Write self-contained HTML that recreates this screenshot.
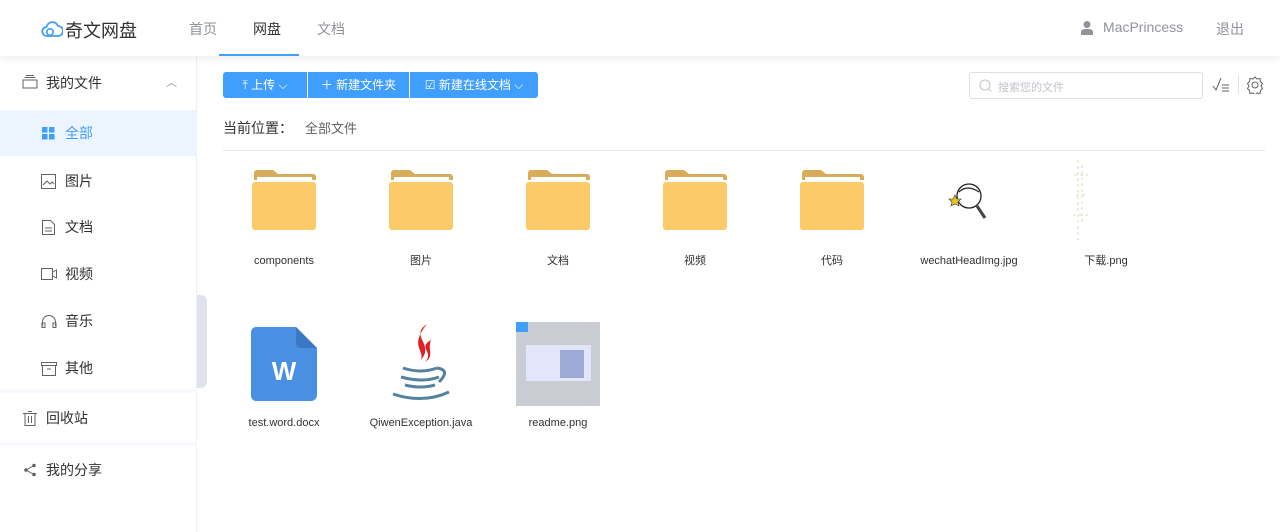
<!DOCTYPE html>
<html><head><meta charset="utf-8"><style>
*{margin:0;padding:0;box-sizing:border-box}
body{width:1280px;height:532px;overflow:hidden;background:#fff;font-family:"Liberation Sans","Noto Sans CJK SC",sans-serif;color:#303133;position:relative}
.abs{position:absolute}
.hdr{left:0;top:0;width:1280px;height:56px;background:#fff;box-shadow:0 2px 8px rgba(0,0,0,.08);z-index:2}
.nav{font-size:14px;color:#909399;top:19px}
.side{left:0;top:56px;width:197px;height:476px;border-right:1px solid #eef0f3;background:#fff}
.si{position:absolute;left:0;width:197px;height:46px;line-height:46px;font-size:14px;color:#303133}
.si svg{position:absolute;top:15px}
.btn{top:72px;height:26px;background:#409eff;color:#fff;font-size:12px;line-height:26px;text-align:center}
.item{position:absolute;width:130px;text-align:center;font-size:11px;line-height:14px;height:14px;color:#303133}
.folder{position:absolute}
</style></head><body>
<div class="abs hdr">
 <svg class="abs" style="left:41px;top:20px" width="22" height="18" viewBox="0 0 22 18"><path d="M6 16a4.5 4.5 0 0 1-.5-9A6 6 0 0 1 17 6a4.6 4.6 0 0 1 0 10z" fill="none" stroke="#409eff" stroke-width="1.8"/><circle cx="9" cy="12" r="3.2" fill="none" stroke="#409eff" stroke-width="1.6"/></svg>
 <div class="abs" style="left:65px;top:17px;font-size:18px;color:#303133">奇文网盘</div>
 <div class="abs nav" style="left:189px">首页</div>
 <div class="abs nav" style="left:253px;color:#303133">网盘</div>
 <div class="abs" style="left:219px;top:54px;width:80px;height:2px;background:#409eff"></div>
 <div class="abs nav" style="left:317px">文档</div>
 <svg class="abs" style="left:1080px;top:20px" width="14" height="16" viewBox="0 0 14 16"><circle cx="7" cy="4.5" r="3.5" fill="#909399"/><path d="M1 15v-3a4 3 0 0 1 4-3h4a4 3 0 0 1 4 3v3z" fill="#909399"/></svg>
 <div class="abs nav" style="left:1103px;color:#909399">MacPrincess</div>
 <div class="abs nav" style="left:1216px">退出</div>
</div>
<div class="abs side">
 <div class="si" style="top:4px"><svg style="left:22px" width="16" height="14" viewBox="0 0 16 14"><path d="M1 5h14v8H1zM2.5 2.5h11M4 .5h8" fill="none" stroke="#606266"/></svg><span style="position:absolute;left:46px">我的文件</span><span style="position:absolute;left:166px;color:#909399;font-size:11px">︿</span></div>
 <div class="si" style="top:54px;background:#ecf5ff;color:#409eff"><svg style="left:42px;top:17px" width="13" height="13"><rect x="0" y="0" width="5.5" height="5.5" fill="#409eff"/><rect x="7" y="0" width="5.5" height="5.5" fill="#409eff"/><rect x="0" y="7" width="5.5" height="5.5" fill="#409eff"/><rect x="7" y="7" width="5.5" height="5.5" fill="#409eff"/></svg><span style="position:absolute;left:65px">全部</span></div>
 <div class="si" style="top:102px"><svg style="left:41px;top:16px" width="15" height="15" viewBox="0 0 15 15"><rect x=".5" y=".5" width="14" height="14" fill="none" stroke="#606266"/><path d="M2 11l4-4 3 3 2-2 2 2" fill="none" stroke="#606266"/></svg><span style="position:absolute;left:65px">图片</span></div>
 <div class="si" style="top:148px"><svg style="left:42px;top:16px" width="13" height="15" viewBox="0 0 13 15"><path d="M.5.5h8l4 4v10H.5z M3 8h7M3 11h7" fill="none" stroke="#606266"/></svg><span style="position:absolute;left:65px">文档</span></div>
 <div class="si" style="top:195px"><svg style="left:41px;top:17px" width="16" height="12" viewBox="0 0 16 12"><rect x=".5" y=".5" width="11" height="11" fill="none" stroke="#606266"/><path d="M12 4l3.5-2v8L12 8" fill="none" stroke="#606266"/></svg><span style="position:absolute;left:65px">视频</span></div>
 <div class="si" style="top:242px"><svg style="left:41px;top:16px" width="16" height="14" viewBox="0 0 16 14"><path d="M1.5 12V8a6.5 6.5 0 0 1 13 0v4M1 9h3v4.5H1zM12 9h3v4.5h-3z" fill="none" stroke="#606266"/></svg><span style="position:absolute;left:65px">音乐</span></div>
 <div class="si" style="top:289px"><svg style="left:41px;top:17px" width="16" height="14" viewBox="0 0 16 14"><path d="M.5.5h15v3H.5zM1.5 3.5v10h13v-10M6 7h4" fill="none" stroke="#606266"/></svg><span style="position:absolute;left:65px">其他</span></div>
 <div class="abs" style="left:0;top:333px;width:197px;height:4px;background:#f7f9fc"></div>
 <div class="si" style="top:339px"><svg style="left:23px;top:16px" width="14" height="15" viewBox="0 0 14 15"><path d="M0 2.5h14M5 .5h4M2 2.5v12h10v-12M5.5 5v7M8.5 5v7" fill="none" stroke="#606266"/></svg><span style="position:absolute;left:46px">回收站</span></div>
 <div class="abs" style="left:0;top:386px;width:197px;height:4px;background:#f7f9fc"></div>
 <div class="si" style="top:391px"><svg style="left:23px;top:16px" width="14" height="14" viewBox="0 0 14 14"><circle cx="11" cy="2.5" r="1.8" fill="#606266"/><circle cx="3" cy="7" r="1.8" fill="#606266"/><circle cx="11" cy="11.5" r="1.8" fill="#606266"/><path d="M11 2.5L3 7l8 4.5" fill="none" stroke="#606266"/></svg><span style="position:absolute;left:46px">我的分享</span></div>
</div>
<div class="abs" style="left:197px;top:295px;width:10px;height:93px;background:#dfe3ea;border-radius:0 6px 6px 0"></div>

<div class="abs btn" style="left:223px;width:84px;border-radius:3px 0 0 3px">⤒ 上传 ⌵</div>
<div class="abs btn" style="left:308px;width:101px">＋ 新建文件夹</div>
<div class="abs btn" style="left:410px;width:128px;border-radius:0 3px 3px 0">☑ 新建在线文档 ⌵</div>
<div class="abs" style="left:969px;top:72px;width:234px;height:27px;border:1px solid #dcdfe6;border-radius:3px"></div>
<svg class="abs" style="left:979px;top:79px" width="13" height="13" viewBox="0 0 13 13"><circle cx="6" cy="6" r="5" fill="none" stroke="#c0c4cc"/><path d="M9.5 9.5l3 3" stroke="#c0c4cc"/></svg>
<div class="abs" style="left:998px;top:79px;font-size:11px;color:#c0c4cc">搜索您的文件</div>
<svg class="abs" style="left:1212px;top:77px" width="18" height="16" viewBox="0 0 18 16"><path d="M1 9l3 4 5-12M10 8h7M10 11h7M10 14h7" fill="none" stroke="#606266"/></svg>
<div class="abs" style="left:1238px;top:76px;width:1px;height:18px;background:#dcdfe6"></div>
<svg class="abs" style="left:1246px;top:76px" width="18" height="18" viewBox="0 0 18 18"><path d="M9 1l2 2 3-.5.5 3 2 2-1.5 2.5 1.5 2.5-2 2-.5 3-3-.5-2 2-2-2-3 .5-.5-3-2-2L3 10 1.5 7.5l2-2 .5-3 3 .5z" fill="none" stroke="#606266"/><circle cx="9" cy="9" r="3" fill="none" stroke="#606266"/></svg>
<div class="abs" style="left:223px;top:118px;font-size:14px;color:#303133">当前位置：</div>
<div class="abs" style="left:305px;top:118px;font-size:13px;color:#606266">全部文件</div>
<div class="abs" style="left:223px;top:150px;width:1042px;height:1px;background:#e4e7ed"></div>

<svg width="0" height="0" style="position:absolute"><defs><g id="fd"><path d="M2 10V3a3 3 0 0 1 3-3h16l5 4h35a3 3 0 0 1 3 3v3z" fill="#d9ac5b"/><rect x="5" y="7" width="55" height="8" fill="#fff"/><rect x="0" y="12" width="64" height="48" rx="3" fill="#fcca69"/></g></defs></svg>
<svg class="folder" style="left:252px;top:170px" width="64" height="60"><use href="#fd"/></svg>
<svg class="folder" style="left:389px;top:170px" width="64" height="60"><use href="#fd"/></svg>
<svg class="folder" style="left:526px;top:170px" width="64" height="60"><use href="#fd"/></svg>
<svg class="folder" style="left:663px;top:170px" width="64" height="60"><use href="#fd"/></svg>
<svg class="folder" style="left:800px;top:170px" width="64" height="60"><use href="#fd"/></svg>
<div class="item" style="left:219px;top:254px">components</div>
<div class="item" style="left:356px;top:254px">图片</div>
<div class="item" style="left:493px;top:254px">文档</div>
<div class="item" style="left:630px;top:254px">视频</div>
<div class="item" style="left:767px;top:254px">代码</div>
<svg class="abs" style="left:947px;top:178px" width="48" height="44" viewBox="0 0 48 44"><circle cx="22" cy="18" r="12" fill="#fff" stroke="#222" stroke-width="1.3"/><path d="M12 14q8-8 20 0" fill="none" stroke="#222" stroke-width="1.3"/><path d="M30 28l8 12" stroke="#444" stroke-width="3"/><polygon points="8,17 10,21 14,21 11,24 12,28 8,26 4,28 5,24 2,21 6,21" fill="#e6c229" stroke="#333" stroke-width=".6"/></svg>
<div class="item" style="left:904px;top:254px">wechatHeadImg.jpg</div>
<svg class="abs" style="left:1068px;top:155px" width="30" height="90"><path d="M10 5v80M6 20h14M8 40h12M5 60h16M14 10v60" stroke="#e3e8d2" stroke-width="1.5" stroke-dasharray="3 3"/></svg>
<div class="item" style="left:1041px;top:254px">下载.png</div>

<svg class="abs" style="left:251px;top:327px" width="66" height="74" viewBox="0 0 66 74"><path d="M5 0h40l21 21v47a6 6 0 0 1-6 6H5a5 5 0 0 1-5-5V5a5 5 0 0 1 5-5z" fill="#4a90e2"/><path d="M45 0v16a5 5 0 0 0 5 5h16z" fill="#3a78c6"/><text x="33" y="53" text-anchor="middle" font-family="Liberation Sans" font-weight="bold" font-size="26" fill="#fff">W</text></svg>
<svg class="abs" style="left:389px;top:322px" width="64" height="84" viewBox="0 0 64 84"><path d="M38 2c-18 12 8 20-6 36 4-10-12-14 6-36zM42 18c-14 8 4 12-6 22 10-6 2-12 6-22z" fill="#e11f22"/><path d="M14 46q18 6 34 0M12 55q22 6 38 0M16 63q16 4 30 0M4 72q30 10 56-2M48 46q14 2 2 14" fill="none" stroke="#5382a1" stroke-width="3"/></svg>
<div class="abs" style="left:516px;top:322px;width:84px;height:84px;background:#c9ccd2"></div>
<div class="abs" style="left:526px;top:345px;width:65px;height:36px;background:#e3e6fb"></div>
<div class="abs" style="left:516px;top:322px;width:12px;height:10px;background:#409eff"></div>
<div class="abs" style="left:560px;top:350px;width:24px;height:28px;background:#9ea9d8"></div>
<div class="item" style="left:219px;top:416px">test.word.docx</div>
<div class="item" style="left:356px;top:416px">QiwenException.java</div>
<div class="item" style="left:493px;top:416px">readme.png</div>
</body></html>
